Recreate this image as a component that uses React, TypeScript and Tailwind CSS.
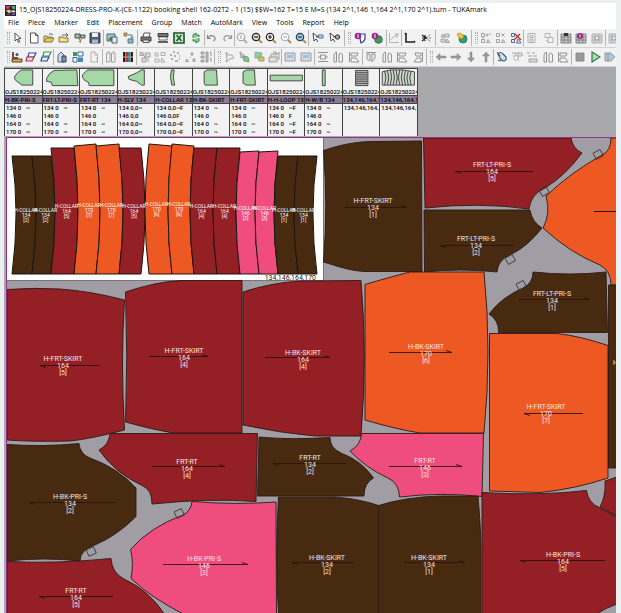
import type { ReactNode } from "react";

const BROWN = "#472a0f";
const RED = "#941f24";
const ORANGE = "#ee5923";
const PINK = "#ef4d7e";
const GREEN = "#a6d8a7";

const menus = ["File", "Piece", "Marker", "Edit", "Placement", "Group", "Match", "AutoMark", "View", "Tools", "Report", "Help"];

// All toolbar glyphs are drawn on a 12x12 grid
const glyphs: Record<string, ReactNode> = {
  pointer: <path d="M3 1v8l2-2 1.500 3.500 1.200-.6L6.300 6.500h2.700z" fill="#fff" stroke="#444" />,
  page: <path d="M2.500 1h5l2.500 2.500V11H2.500zM7.500 1v2.500H10" fill="#fff" stroke="#444" />,
  open: (
    <>
      <path d="M1 10V4h3l1 1h4v2" fill="#f6e6a0" stroke="#7a6a2a" />
      <path d="M1 10l2-4h8l-2 4z" fill="#e8c860" stroke="#7a6a2a" />
      <path d="M6 2.500q2-2 4 .5" stroke="#555" />
    </>
  ),
  merge: (
    <>
      <path d="M1 10V5h4l1 1h4v4z" fill="#f2dd95" stroke="#7a6a2a" />
      <path d="M4 3h6M8 1l2 2-2 2" stroke="#555" />
    </>
  ),
  filter: (
    <>
      <path d="M1 2h5v4H1zM6 3h5v3H7z" fill="#9cc2b0" stroke="#444" />
      <path d="M4 6l3 3-1 2M8 6l-3 4" stroke="#8a6d20" />
    </>
  ),
  save: (
    <>
      <path d="M1 1h10v10H1z" fill="#4a5c74" stroke="#333" />
      <path d="M3 1h6v4H3z" fill="#eef" />
      <path d="M3 7.500h6V11H3z" fill="#aab6c6" />
    </>
  ),
  image: (
    <>
      <path d="M1 2h8v7H1z" fill="#a9c7da" stroke="#456" />
      <path d="M2 8l3-4 2 3 1-1 1 3z" fill="#4d8a4e" />
      <path d="M6 5h5v6H6z" fill="#dcebf2" stroke="#456" />
    </>
  ),
  swap: (
    <>
      <path d="M1 1h3v3H1z" fill="#e3a93c" stroke="#865" />
      <path d="M5 3h4v3M7.500 5L9 6.500 10.500 5" stroke="#467" />
      <path d="M5 7h5v4H5z" fill="#8fb6dd" stroke="#467" />
    </>
  ),
  print: (
    <>
      <path d="M3 5l1-4h6L9 5" fill="#fff" stroke="#444" />
      <path d="M1 5h10v4H1z" fill="#777" stroke="#333" />
      <path d="M3 8h6v2.500H3z" fill="#eee" stroke="#444" />
    </>
  ),
  plotter: (
    <>
      <path d="M1 1.500h10v3H1z" fill="#777" stroke="#333" />
      <path d="M2 5h8v3H2z" fill="#fff" stroke="#555" />
      <path d="M1 10h10" stroke="#333" strokeWidth="1.500" />
    </>
  ),
  excel: (
    <>
      <path d="M1 1h10v10H1z" fill="#d5e8d5" stroke="#14541f" strokeWidth="1.600" />
      <path d="M3.500 3l5 6M8.500 3l-5 6" stroke="#1b6a2b" strokeWidth="1.800" />
    </>
  ),
  refresh: <path d="M3 6V3l3-2v2h3v2M9 6v3l-3 2V9H3V7" fill="#8fca94" stroke="#257a35" />,
  undo: <path d="M1.500 3v3.500H5M2 6q3-4 6-1.500Q10.500 7 7.500 9" stroke="#888" strokeWidth="1.200" />,
  redo: <path d="M10.500 3v3.500H7M10 6Q7 2 4 4.500 1.500 7 4.500 9" stroke="#999" strokeWidth="1.200" />,
  arrowMode: (
    <>
      <path d="M1 1l1 8 2-2 2 3M1 1l5 4H4" fill="#fff" stroke="#333" />
      <path d="M6 3h5v3H7z" fill="#b8d6ea" stroke="#468" />
    </>
  ),
  arrowDark: (
    <>
      <path d="M1 1l1 8 2-2 2 3M1 1l5 4H4" fill="#fff" stroke="#333" />
      <circle cx="8.500" cy="5" r="2.200" fill="#aaa" stroke="#222" />
    </>
  ),
  pieceInfo: (
    <>
      <path d="M5 2h6v5q-1 3-4 4z" fill="#fff" stroke="#2c3c8c" strokeWidth="1.200" />
      <circle cx="4" cy="4" r="3.300" fill="#a02590" />
      <path d="M4 2v4" stroke="#fff" />
    </>
  ),
  globeInfo: (
    <>
      <circle cx="7.500" cy="7.500" r="3.800" fill="#3e9a55" stroke="#265" />
      <circle cx="4" cy="4" r="3.300" fill="#a02590" />
      <path d="M4 2v4" stroke="#fff" />
    </>
  ),
  graph: <path d="M1.500 1v9.500H11M3 8l3-4h4M9 2v4M7 2h4" stroke="#aaa" />,
  axis: <path d="M2 1v9h9M2 1L1 2.500M11 10l-1-1" stroke="#222" strokeWidth="1.600" />,
  cut: (
    <>
      <path d="M5 6l5-4M5 6l5 4M5 6h6" stroke="#666" strokeDasharray="2 1" />
      <path d="M1 3l4 3-4 3M1 6h4M4 3v6" stroke="#222" strokeWidth="1.200" />
    </>
  ),
  shapes: (
    <>
      <path d="M2 5l2-3 2 3zM6 2h4v3H6z" fill="#ddd" stroke="#999" />
      <path d="M2 7h4v3H2zM8 7l2.500 3.500h-4z" fill="#ddd" stroke="#999" />
    </>
  ),
  ball: (
    <>
      <circle cx="7" cy="7" r="4" fill="#3b9c62" stroke="#276" />
      <path d="M1 2l3-1 4 3-2 3-3-1z" fill="#f2c33c" stroke="#a57c1c" strokeWidth=".6" />
    </>
  ),
  nodes: (
    <path d="M1.500 1.500h3v3h-3zM1.500 7.500h3v3h-3zM8 7.500l2 3H6.500zM7 1.500v3M5.500 3h3M9 2h2M3 5v2" stroke="#999" />
  ),
  nodesAlt: <path d="M1.500 1.500h3v3h-3zM1.500 7.500h3v3h-3zM8 7.500l2 3H6.500zM6.500 1.500l3 3M9.500 1.500l-3 3" stroke="#999" />,
  nodesCut: (
    <>
      <path d="M1.500 1.500h3v3h-3zM1.500 7.500h3v3h-3zM8 7l3 4H6.500z" stroke="#345a9c" />
      <path d="M5 2l6 6M10 2L4 8" stroke="#c82d2d" strokeWidth="1.400" />
    </>
  ),
  frame: <path d="M2 1.500h7v9H2zM4 3.500h3v2H4zM4 7h3v2H4z" stroke="#aaa" />,
  frameOut: <path d="M2 1.500h5v4H2zM5 5.500h5v5H5zM3 8l2 2" stroke="#aaa" />,
  gridDark: (
    <>
      <path d="M1 2h10v9H1z" fill="#ccc" stroke="#777" />
      <path d="M1 5h10M1 8h10M4 2v9M8 2v9" stroke="#777" />
      <path d="M4 1h4v3H4z" fill="#333" />
    </>
  ),
  gridInfo: (
    <>
      <path d="M1 2h10v9H1z" fill="#ccc" stroke="#777" />
      <path d="M1 5h10M1 8h10M4 2v9M8 2v9" stroke="#777" />
      <circle cx="5" cy="4" r="3" fill="#a02590" />
      <path d="M5 2.500v3" stroke="#fff" />
    </>
  ),
  gridOff: (
    <>
      <path d="M1 2h10v9H1z" fill="#ddd" stroke="#aaa" />
      <path d="M1 5h10M1 8h10M4 2v9M8 2v9" stroke="#aaa" />
      <circle cx="6" cy="6" r="2" fill="#eee" stroke="#999" />
    </>
  ),
  layRed: (
    <>
      <path d="M2 1v5" stroke="#222" strokeWidth="1.500" />
      <path d="M1 6h6v2H1z" fill="#c03030" />
      <path d="M1 8h10v3H1z" fill="#d8b03c" stroke="#432" />
      <circle cx="6" cy="3.500" r="1.500" fill="#2c5a9c" />
    </>
  ),
  sheetsRed: (
    <>
      <path d="M4 2h7L9 6H3z" fill="#fff" stroke="#2c4c9c" strokeWidth="1.200" />
      <path d="M2 6h7l-2 4H1z" fill="#f7d5d5" stroke="#a8325c" strokeWidth="1.200" />
    </>
  ),
  sheetsGreen: (
    <>
      <path d="M4 1h7L9 5H3z" fill="#fff" stroke="#2b9a48" strokeWidth="1.200" />
      <path d="M2 6h7l-2 4H1z" fill="#e0edf8" stroke="#2c4c9c" strokeWidth="1.200" />
    </>
  ),
  home: (
    <>
      <path d="M2 4l3-3 3 3v7H2z" fill="#ccd8ea" stroke="#445a88" />
      <path d="M6 5h4v6H6z" fill="#7a90b8" stroke="#334" />
    </>
  ),
  copyShapes: (
    <>
      <path d="M1 1h4v4H1z" fill="#3f9a4e" />
      <path d="M6 1h5v4H6z" fill="#fff" stroke="#2c4c9c" />
      <path d="M1 6.500h4V11H1z" fill="#fff" stroke="#2c4c9c" />
      <path d="M6 6.500h5V11H6z" fill="#3b8fb0" />
    </>
  ),
  pageOff: <path d="M3 1h4l2.500 2.500V11H3zM7 1v3h2.500M8 7l2 2-2 2" stroke="#aaa" />,
  columns: <path d="M1.500 2h3.500v9H1.500zM6.500 2H10v9H6.500zM2.500 1h2M7.500 1h2" stroke="#999" />,
  bars: (
    <>
      <path d="M1 1h2.500v10H1z" fill="#222" />
      <path d="M4 1h2v10H4z" fill="#b33" />
      <path d="M6 1h2v10H6z" fill="#2a8bb0" />
      <path d="M8.500 1H11v10H8.500z" fill="#222" />
      <path d="M1 6h10" stroke="#d9b84a" />
    </>
  ),
  cluster: <path d="M1 1.500h3v3H1zM6 2h5v4H7zM3 7h4v4H3zM9 7v4M4 3l3 5" fill="#ddd" stroke="#999" />,
  scatter: <path d="M1 2h3v3H1zM7 1.500h4v3H7zM1 8h4v3H1zM8 7l3 4H7z" stroke="#a5a5a5" />,
  dots: <path d="M4 1h2M8 2h2M1 4h2M10 5h1M2 8h2M6 10h3M10 8h1M5 5h2" stroke="#999" strokeWidth="1.500" />,
  tri: <path d="M6 2h2v2H6zM2 8l1.500 2.500h-3zM8 8h2v2.500H8zM5 6v1" fill="#ccc" stroke="#999" />,
  blocks: <path d="M1 1h3v2H1zM1 5h3v2H1zM1 9h3v2H1zM6 1h2v10H6zM10 1h1v4M10 7h1v4" fill="#bbb" stroke="#999" />,
  leaf: <path d="M3 1l2 3h4l2 3-4 1-4 3 1-4z" stroke="#999" />,
  leafGreen: (
    <>
      <path d="M2 1l4 3 1 2-4 1z" fill="#ccc" stroke="#999" />
      <path d="M5 5l5 1 1 5-5-1z" fill="#7fca82" stroke="#6a9a6c" />
    </>
  ),
  cubeGreen: (
    <>
      <path d="M2 1l7 1-1 5H2z" fill="#8fd092" stroke="#8aa" />
      <path d="M5 6h6v4H6z" fill="#d4c46a" stroke="#9a9a6a" />
    </>
  ),
  boxOff: <path d="M1 6h8v5H1zM3 6V3h6l2-2v8M5 1h3v3" fill="#ddd" stroke="#999" />,
  screen: (
    <>
      <path d="M1 2h10v8H1z" fill="#d5dde4" stroke="#8a949e" />
      <path d="M3 4h6v3H3z" fill="#a7bccc" />
    </>
  ),
  alignMid: <path d="M1 1.500h10M1 10.500h10M3.500 4h5v4h-5zM1 6h2M9 6h2" stroke="#888" />,
  alignPair: <path d="M2 4q1-3 2.500-3v10H2zM7 3q3-2 3.500 1v7H7z" stroke="#888" />,
  alignLeft: <path d="M1.500 1v10M3 2h7L9 5H3zM3 7h5l3 4H3z" stroke="#888" />,
  alignRight: <path d="M10.500 1v10M9 2H3l1 3h5zM9 7H5l-3 4h7z" stroke="#888" />,
  alignTop: <path d="M1 1.500h10M2 3h3v7l-3-2zM7 3h3v4l-3 4z" stroke="#888" />,
  left: <path d="M1 6l4-3.500V5h6v2H5v2.500z" fill="#999" stroke="#888" strokeWidth=".5" />,
  right: <path d="M11 6L7 2.500V5H1v2h6v2.500z" fill="#999" stroke="#888" strokeWidth=".5" />,
  down: <path d="M6 11L2.500 7H5V1h2v6h2.500z" fill="#999" stroke="#888" strokeWidth=".5" />,
  up: <path d="M6 1L2.500 5H5v6h2V5h2.500z" fill="#999" stroke="#888" strokeWidth=".5" />,
  chain: (
    <>
      <path d="M2 3q2-3 5 0l3 3q1 4-3 4-2-1-3-3z" fill="#cfe0ee" stroke="#36587c" strokeWidth="1.200" />
      <path d="M1 1l3 4M2 9l3 1" stroke="#333" />
    </>
  ),
  step: <path d="M1 2h4v3H2M7 1v9M7 2h4v3H7M2 7l3 3" stroke="#999" />,
  stack: <path d="M1 2h3M6 2h3M2 5h4M7 5h4M3 8h8v3H3z" fill="#ddd" stroke="#999" />,
  stop: <path d="M2 2h8v8H2z" fill="#999" stroke="#888" />,
  play: <path d="M3 1l8 5-8 5z" fill="#a7dcb5" stroke="#2f7d4a" strokeWidth="1.200" />,
  next: <path d="M1 2h6l4 4-4 4H1zM4 2v8" fill="#b5c6d2" stroke="#8595a2" />,
};

const zoomColors: Record<string, [string, string]> = {
  zoomOne: ["#fff", "#aaa"],
  zoomFit: ["#d9d9d9", "#222"],
  zoomIn: ["#fff", "#222"],
  zoomOut: ["#fff", "#aab4bc"],
  zoomAll: ["#9dc4dc", "#345"],
};

const Glyph = ({ name }: { name: string }) => {
  const zoom = zoomColors[name];
  return (
    <svg viewBox="0 0 12 12" className="size-3 shrink-0" fill="none" strokeWidth=".9">
      {zoom ? (
        <>
          <path d="M7.500 7.500l3.500 3.500" stroke={zoom[1] === "#aaa" ? "#aaa" : "#b08f3c"} strokeWidth="1.800" />
          <circle cx="5" cy="5" r="3.700" fill={zoom[0]} stroke={zoom[1]} strokeWidth="1.200" />
          <path d={name === "zoomOne" ? "M5 3v4" : name === "zoomIn" ? "M3 5h4M5 3v4" : "M3 5h4"} stroke={zoom[1]} strokeWidth="1.200" />
        </>
      ) : (
        glyphs[name]
      )}
    </svg>
  );
};

type Group = { width: string; icons: string[]; grip?: boolean };

const mainBar: Group[] = [
  { width: "w-[22px]", icons: ["pointer"], grip: true },
  { width: "w-[78px]", icons: ["page", "open", "merge", "filter", "save"] },
  { width: "w-[34px]", icons: ["image", "swap"] },
  { width: "w-[67px]", icons: ["print", "plotter", "excel", "refresh"] },
  { width: "w-[30px]", icons: ["undo", "redo"] },
  { width: "w-[74px]", icons: ["zoomOne", "zoomFit", "zoomIn", "zoomOut", "zoomAll"] },
  { width: "w-[36px]", icons: ["arrowMode", "arrowDark"] },
  { width: "w-[42px]", icons: ["pieceInfo", "globeInfo"], grip: true },
  { width: "w-[15px]", icons: ["graph"] },
  { width: "w-[34px]", icons: ["axis", "cut"] },
  { width: "w-[36px]", icons: ["shapes", "ball"] },
  { width: "w-[52px]", icons: ["nodes", "nodesAlt", "nodesCut"], grip: true },
  { width: "w-[34px]", icons: ["frame", "frameOut"] },
  { width: "w-[48px]", icons: ["gridDark", "gridInfo", "gridOff"] },
  { width: "w-[16px]", icons: ["gridOff"] },
];

const pieceBar: Group[] = [
  { width: "w-[50px]", icons: ["layRed", "sheetsRed", "sheetsGreen"], grip: true },
  { width: "w-[49px]", icons: ["home", "copyShapes", "pageOff"] },
  { width: "w-[34px]", icons: ["columns", "bars"] },
  { width: "w-[78px]", icons: ["cluster", "scatter", "dots", "tri", "blocks"] },
  { width: "w-[67px]", icons: ["leaf", "leafGreen", "cubeGreen", "boxOff"], grip: true },
  { width: "w-[33px]", icons: ["screen", "screen"] },
  { width: "w-[48px]", icons: ["alignMid", "alignPair", "alignLeft"] },
  { width: "w-[64px]", icons: ["alignTop", "alignPair", "alignLeft", "alignRight"] },
  { width: "w-[67px]", icons: ["left", "right", "down", "up"], grip: true },
  { width: "w-[78px]", icons: ["chain", "step", "stack", "alignPair", "alignLeft"] },
  { width: "w-[46px]", icons: ["stop", "play", "next"] },
];

const Toolbar = ({ label, groups }: { label: string; groups: Group[] }) => (
  <div role="toolbar" aria-label={label} className="flex h-[19px] items-center overflow-hidden border-b border-[#d2d2d2] bg-[#f2f2f2]">
    {groups.map((group, index) => (
      <div key={index} className={`flex h-4 shrink-0 items-center border-r border-[#b4b4b4] ${group.width}`}>
        {group.grip && <span className="ml-[3px] h-3 w-[3px] shrink-0 border-x border-dotted border-[#a8a8a8]" />}
        <div className="flex flex-1 justify-around">
          {group.icons.map((icon, i) => (
            <button key={i} type="button" aria-label={icon} className="flex size-3 shrink-0 items-center justify-center">
              <Glyph name={icon} />
            </button>
          ))}
        </div>
      </div>
    ))}
  </div>
);

type Thumb = { name: string; shape: ReactNode; rows: [string, string][] };

const plainRows: [string, string][] = [["134 0", "~"], ["146 0", ""], ["164 0", "~"], ["170 0", "~"]];
const pairRows: [string, string][] = [["134 0,0", "~"], ["146 0,0", ""], ["164 0,0", "~"], ["170 0,0", "~"]];
const flipRows: [string, string][] = [["134 0,0", "~F"], ["146 0,0", "F"], ["164 0,0", "~F"], ["170 0,0", "~F"]];
const loopRows: [string, string][] = [["134 0", "~F"], ["146 0", "F"], ["164 0", "~F"], ["170 0", "~F"]];
const setRows: [string, string][] = [["134,146,164,170", ""], ["", ""], ["", ""], ["", ""]];

const thumbs: Thumb[] = [
  { name: "H-BK-PRI-S", shape: <path d="M9.500 8l3-4 4-3h12v16H17l-4-3-3.500-3z" />, rows: plainRows },
  { name: "FRT-LT-PRI-S", shape: <path d="M3 10l3-5 5-3.500 24-.5 1 16.500H9L8 14l-5-1z" />, rows: plainRows },
  { name: "FRT-RT 134", shape: <path d="M2 6l3-3 2-2h28v16.500H9L8 14 4 12 2 9z" />, rows: plainRows },
  { name: "H-SLV 134", shape: <path d="M10 8l9-4 5-3h3v16h-3l-5-4-8-2z" />, rows: pairRows },
  { name: "H-COLLAR 134", shape: <path d="M16.500 1h3q-2 8 .5 16h-3q-2.500-8-.5-16z" />, rows: flipRows },
  { name: "H-BK-SKIRT", shape: <path d="M11 3l3-2h10l1 16H12l-1-2z" />, rows: plainRows },
  { name: "H-FRT-SKIRT", shape: <path d="M13 3l4-2h8l1 16H16l-3-2z" />, rows: plainRows },
  { name: "H-H-LOOP 134", shape: <path d="M1.500 6.500h34v6h-34z" />, rows: loopRows },
  { name: "H-W/B 134", shape: <path d="M17.500 1h3v16.500h-3z" />, rows: plainRows },
  {
    name: "134,146,164,170",
    shape: (
      <>
        <path d="M12.500 1.500h13v16h-13z" fill="#c8c8c8" />
        <path d="M13 3.500h12M13 5.500h12M13 7.500h12M13 9.500h12M13 11.500h12M13 13.500h12M13 15.500h12" />
      </>
    ),
    rows: setRows,
  },
  {
    name: "134,146,164,170",
    shape: (
      <>
        <path d="M1.500 3l8-2h14l12 2v14h-34z" fill="#d8d8d8" />
        <path d="M4 2q3 7 0 15M7 2q3 7 0 15M10 1q3 8 0 16M13 1q3 8 0 16M16 1q3 8 0 16M20 1q-3 8 0 16M23 1q-3 8 0 16M26 2q-3 7 0 15M29 2q-3 7 0 15M32 2q-3 7 0 15" />
      </>
    ),
    rows: setRows,
  },
];

const cell = "overflow-hidden border-x border-[#444] whitespace-nowrap";

const PieceTable = () => (
  <table className="w-[414px] table-fixed border-collapse border-t border-[#444] bg-[#f3f2f3] font-['Roboto',sans-serif] text-[6px] leading-[7px] font-medium text-black">
    <thead>
      <tr>
        {thumbs.map((thumb, i) => (
          <td key={i} className={`${cell} h-[19px] p-0`}>
            <svg viewBox="0 0 37 19" className="block h-[18px] w-full" fill={GREEN} stroke="#333" strokeWidth=".9">
              {thumb.shape}
            </svg>
          </td>
        ))}
      </tr>
      <tr>
        {thumbs.map((_, i) => (
          <td key={i} className={`${cell} h-[8px] border-b p-0`}>OJS18250224</td>
        ))}
      </tr>
      <tr>
        {thumbs.map((thumb, i) => (
          <th key={i} scope="col" className={`${cell} h-[7px] border-b bg-[#8a7c94] p-0 text-left font-medium`}>{thumb.name}</th>
        ))}
      </tr>
    </thead>
    <tbody>
      {[0, 1, 2, 3].map((row) => (
        <tr key={row}>
          {thumbs.map((thumb, i) => (
            <td key={i} className={`${cell} h-[8px] p-0 pl-px`}>
              <span className="inline-block min-w-[20px]">{thumb.rows[row][0]}</span>
              {thumb.rows[row][1]}
            </td>
          ))}
        </tr>
      ))}
    </tbody>
  </table>
);

type Piece = {
  d: string;
  fill: string;
  label?: [name: string, size: string, lot: string];
  x?: number;
  y?: number;
  arrow?: [from: number, to: number, y: number];
};

// The arrow runs from its first x to its second, so its head shows the grain direction
const pieces: Piece[] = [
  { d: "M323.500 149.500C345 142 362 140.500 375 140.500L421.500 140L422 270.500H365C350 270 337 265 323.500 261Q328 205 323.500 149.500Z", fill: BROWN, label: ["H-FRT-SKIRT", "134", "[1]"], x: 373, y: 199, arrow: [345, 407, 206] },
  { d: "M423.500 137H571Q573 148 582 152Q565 175 545 187Q531 193 529 208Q480 201 425 207Z", fill: RED, label: ["FRT-LT-PRI-S", "164", "[5]"], x: 492, y: 163, arrow: [533, 455, 170] },
  { d: "M424 209H530Q532 221 542 227Q528 245 512 253Q498 258 497 271Q460 267 424.500 271Z", fill: BROWN, label: ["FRT-LT-PRI-S", "134", "[2]"], x: 476, y: 237, arrow: [514, 440, 244] },
  { d: "M611 137Q611 150 602 154Q570 172 546 195Q551 212 543 227Q570 252 600 264Q611 270 611 284H617V137Z", fill: ORANGE },
  { d: "M533 271Q533 282 523 287Q502 296 489 313Q499 319 498.500 331.500H607.500L606 271Q570 275 533 271Z", fill: BROWN, label: ["FRT-LT-PRI-S", "134", "[1]"], x: 552, y: 292, arrow: [519, 590, 298] },
  { d: "M608.500 284H617V467H608.500Z", fill: BROWN },
  { d: "M7 288.500Q35 286.500 60 288Q90 290 124.500 299Q120.500 360 124.500 429Q90 438 70 440Q35 441 7 439Z", fill: RED, label: ["H-FRT-SKIRT", "164", "[5]"], x: 63, y: 357, arrow: [100, 40, 364] },
  { d: "M125.500 291Q155 281 180 279.500H242V432H173Q150 428 125.500 421Q128 355 125.500 291Z", fill: RED, label: ["H-FRT-SKIRT", "164", "[4]"], x: 184, y: 349, arrow: [149, 208, 355] },
  { d: "M243 291Q270 282 300 280L361 279.500Q367.500 355 361 435H315Q280 432 243 424Z", fill: RED, label: ["H-BK-SKIRT", "164", "[4]"], x: 303, y: 351, arrow: [265, 330, 356] },
  { d: "M365 283.500Q390 276 410 271H484Q492 350 484 432H420Q395 428 365 419Z", fill: ORANGE, label: ["H-BK-SKIRT", "170", "[6]"], x: 426, y: 345, arrow: [389, 452, 351] },
  { d: "M489.500 332.500H557Q580 335 608 344.500V477Q575 488 540 491.500L489.500 490Z", fill: ORANGE, label: ["H-FRT-SKIRT", "170", "[7]"], x: 546, y: 405, arrow: [583, 524, 412] },
  { d: "M361.500 432.500H483.500L482 495.500Q440 491 399.500 496Q399 482 388 477Q366 467 350 450Q361 444 361.500 432.500Z", fill: PINK, label: ["FRT-RT", "146", "[3]"], x: 425, y: 459, arrow: [389, 462, 465] },
  { d: "M110 432.500H257.500L256 500.500Q210 497 152 503Q152 489 143 485Q115 472 99 449Q109 444 110 432.500Z", fill: RED, label: ["FRT-RT", "164", "[4]"], x: 187, y: 460, arrow: [152, 225, 465] },
  { d: "M259 436Q290 439 330 436.500Q330 447 341 452Q362 460 373.500 477Q364 482 364 495H257.500Z", fill: BROWN, label: ["FRT-RT", "134", "[2]"], x: 310, y: 456, arrow: [346, 273, 462] },
  { d: "M7 443.500Q45 446 79 442.500Q80 453 90 457Q118 467 136 487V515.500Q118 534 95 544Q80 549 80 560Q45 556 7 560Z", fill: BROWN, label: ["H-BK-PRI-S", "134", "[2]"], x: 70, y: 495, arrow: [115, 29, 501] },
  { d: "M192 500.500Q235 504 276 501L276.500 614H185Q150 596 131 577.500Q134 562 130.500 548.500Q150 526 183 514Q191 510 192 500.500Z", fill: PINK, label: ["H-BK-PRI-S", "146", "[3]"], x: 204, y: 557, arrow: [163, 248, 563] },
  { d: "M7 560.500Q55 563 111 557.500Q112 572 124 578Q150 590 165 614H7Z", fill: RED, label: ["FRT-RT", "164", "[5]"], x: 76, y: 589, arrow: [113, 39, 595] },
  { d: "M278.500 496H335Q360 498 378.500 504.500V614H278.500Q275 555 278.500 496Z", fill: BROWN, label: ["H-BK-SKIRT", "134", "[2]"], x: 327, y: 556, arrow: [354, 292, 561] },
  { d: "M378.500 504.500Q405 496 440 495H478Q481 530 481 550V614H378.500Z", fill: BROWN, label: ["H-BK-SKIRT", "134", "[1]"], x: 429, y: 556, arrow: [404, 465, 561] },
  { d: "M482 491.500Q540 495 586.500 489.500Q588 502 600 507L617 516V603Q605 607 595 614H482Z", fill: RED, label: ["H-BK-PRI-S", "164", "[5]"], x: 563, y: 553, arrow: [605, 520, 559] },
  { d: "M605 480L617 476V515L600 506Q606 495 605 480Z", fill: RED },
];

const notches = [[598, 153, -28], [544, 190, -30], [510, 258, -30], [521, 284, -28], [179, 512, -24], [91, 550, -24]];

// left, right, top at left edge, top at right edge, colour, size, lot
const collars: [number, number, number, number, string, string, string][] = [
  [12, 32, 155, 155, BROWN, "134", "[2]"],
  [32, 51, 155, 155, BROWN, "134", "[2]"],
  [51, 74, 147, 147, RED, "164", "[5]"],
  [74, 96, 145, 143, ORANGE, "170", "[7]"],
  [96, 119, 145, 143, ORANGE, "170", "[7]"],
  [119, 141, 147, 147, RED, "164", "[5]"],
  [149, 172, 143, 145, ORANGE, "170", "[6]"],
  [172, 194, 143, 145, ORANGE, "170", "[6]"],
  [194, 217, 147, 147, RED, "164", "[4]"],
  [217, 240, 147, 147, RED, "164", "[4]"],
  [240, 259, 151, 150, PINK, "146", "[3]"],
  [259, 278, 151, 150, PINK, "146", "[3]"],
  [278, 298, 155, 155, BROWN, "134", "[1]"],
  [298, 317, 155, 155, BROWN, "134", "[1]"],
];

const Collars = () => (
  <g>
    {collars.map(([left, right, topLeft, topRight, fill], i) => {
      const bend = i < 6 ? 8 : -8;
      return (
        <path
          key={i}
          d={`M${left} ${topLeft}L${right} ${topRight}Q${right + bend} 212 ${right} 273H${left}Q${left + bend} 212 ${left} ${topLeft}Z`}
          fill={fill}
          stroke="#1d1410"
        />
      );
    })}
    {collars.map(([left, right, top, , , size, lot], i) => {
      const x = (left + right) / 2 + (i < 6 ? 4 : -4);
      const y = 210 - Math.round((155 - top) / 2);
      return (
        <g key={i} fill="#fff" fontSize="5" textAnchor="middle">
          <text x={x} y={y + 1}>H-COLLAR</text>
          <text x={x} y={y + 6}>{size}</text>
          <text x={x} y={y + 11}>{lot}</text>
        </g>
      );
    })}
  </g>
);

const Marker = () => (
  <svg
    viewBox="6 136 610 477"
    className="block h-auto w-full bg-[#a19da4] font-['Roboto',sans-serif]"
    role="img"
    aria-label="Marker layout"
  >
    <path d="M7 137H323V279H7Z" fill="#fff" />
    <path d="M323.500 137V279.500H7" fill="none" stroke="#77737a" />
    <Collars />
    <text x="316" y="279" fontSize="7" textAnchor="end" fill="#222">134,146,164,170</text>

    {pieces.map((piece, i) => (
      <path key={i} d={piece.d} fill={piece.fill} stroke="#2b1a18" strokeWidth=".9" />
    ))}

    {notches.map(([x, y, turn], i) => (
      <rect key={i} x={x - 4} y={y - 3} width="8" height="7" transform={`rotate(${turn} ${x} ${y})`} fill="none" stroke="#333" strokeWidth=".8" />
    ))}

    {pieces.map(({ label, x = 0, y = 0, arrow }, i) => {
      if (!label || !arrow) return null;
      const [from, to, ay] = arrow;
      const line = ay + 0.5;
      const back = to > from ? -6 : 6;
      const side = to > from ? -2 : 2;
      return (
        <g key={i}>
          <path d={`M${from} ${line}H${to}l${back} ${side}`} fill="none" stroke="#2b1410" strokeWidth=".9" />
          <g fill="#f4e6e2" fontSize="7" textAnchor="middle">
            <text x={x} y={y + 3}>{label[0]}</text>
            <text x={x} y={y + 10}>{label[1]}</text>
            <text x={x} y={y + 17}>{label[2]}</text>
          </g>
        </g>
      );
    })}
    <path d="M594 210.500H616" stroke="#2b1410" />
    <text x="613" y="364" fontSize="7" fill="#f4e6e2">H</text>
    <path d="M6.500 613V136.500H616" fill="none" stroke="#94308c" />
  </svg>
);

const App = () => {
  return (
    <div className="min-h-screen overflow-hidden bg-[#edf0f1] pt-[3px] pr-[5px] pl-1 font-['Open_Sans',sans-serif] text-black">
      <header className="bg-white">
        <div className="flex h-[14px] items-center gap-[3px] pl-px">
          <svg viewBox="0 0 12 12" className="h-[11px] w-[11px] shrink-0">
            <path d="M0 0h12v12H0z" fill="#2a2430" />
            <path d="M1 1h5l-2 3H1z" fill="#d43b8f" />
            <path d="M7 1h4v4L8 4z" fill="#4fae5c" />
            <path d="M1 6l4-1 2 3-3 1z" fill="#e7d348" />
            <path d="M6 6h5v2H8z" fill="#e9e9f2" />
            <path d="M2 10h4v1H2zM8 9h3v2H7z" fill="#8b45c0" />
          </svg>
          <h1 className="text-[7px] leading-[12px] font-normal whitespace-nowrap">
            15_OJS18250224-DRESS-PRO-K-(CE-1122) booking shell 162-02T2 - 1 (15) $$W=162 T=15 E M=S (134 2^1,146 1,164 2^1,170 2^1).tum - TUKAmark
          </h1>
        </div>
        <nav className="flex h-[12px] items-center gap-[9px] pl-1 text-[7px] leading-[12px]">
          {menus.map((menu) => (
            <button key={menu} type="button">{menu}</button>
          ))}
        </nav>
      </header>
      <Toolbar label="Standard" groups={mainBar} />
      <Toolbar label="Pieces" groups={pieceBar} />
      <main className="bg-[#a9a8ab] pt-px">
        <PieceTable />
        <div className="pt-px pl-[2px]">
          <Marker />
        </div>
      </main>
    </div>
  );
};

export default App;
